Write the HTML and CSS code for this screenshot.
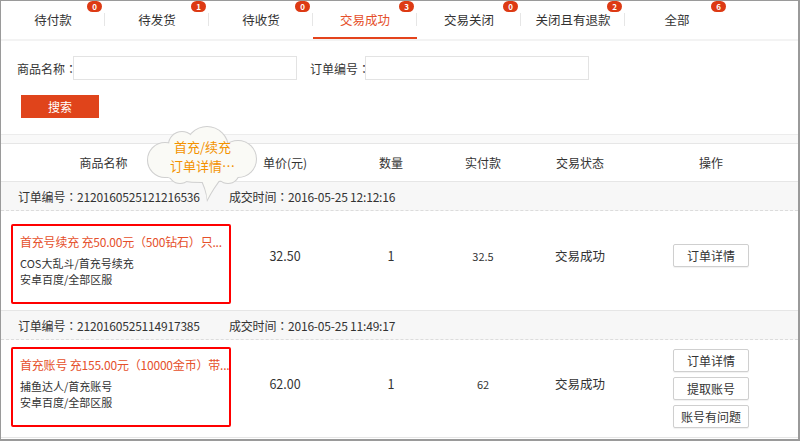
FILE: index.html
```html
<!DOCTYPE html>
<html lang="zh-CN">
<head>
<meta charset="utf-8">
<title>订单列表</title>
<link rel="stylesheet" href="styles.css">
</head>
<body>
<div class="frame">
  <div class="tabs">
    <div class="tab">待付款<span class="badge">0</span></div>
    <div class="tab">待发货<span class="badge">1</span></div>
    <div class="tab">待收货<span class="badge">0</span></div>
    <div class="tab active">交易成功<span class="badge">3</span></div>
    <div class="tab">交易关闭<span class="badge">0</span></div>
    <div class="tab">关闭且有退款<span class="badge">2</span></div>
    <div class="tab last">全部<span class="badge">6</span></div>
  </div>

  <div class="search">
    <div class="search-row">
      <label class="lbl">商品名称<span class="colon" lang="ja">：</span></label>
      <input class="inp" type="text">
      <label class="lbl lbl2">订单编号<span class="colon" lang="ja">：</span></label>
      <input class="inp" type="text">
    </div>
    <button class="btn-search">搜索</button>
  </div>

  <div class="gap"></div>

  <div class="grid head">
    <div class="c1 h1">商品名称</div>
    <div class="cc">单价(元)</div>
    <div class="cc">数量</div>
    <div class="cc">实付款</div>
    <div class="cc">交易状态</div>
    <div class="cc">操作</div>
  </div>

  <div class="info">
    <span class="ordno">订单编号<span class="colon" lang="ja">：</span>2120160525121216536</span>
    <span class="otime">成交时间<span class="colon" lang="ja">：</span>2016-05-25 12:12:16</span>
  </div>
  <div class="grid item item1">
    <div class="c1 goods">
      <div class="box">
        <div class="title">首充号续充 充50.00元（500钻石）只...</div>
        <div class="sub">COS大乱斗/首充号续充</div>
        <div class="sub">安卓百度/全部区服</div>
      </div>
    </div>
    <div class="cc cv">32.50</div>
    <div class="cc cv">1</div>
    <div class="cc cv small">32.5</div>
    <div class="cc cv">交易成功</div>
    <div class="cc ops pad"><button class="btn">订单详情</button></div>
  </div>

  <div class="info">
    <span class="ordno">订单编号<span class="colon" lang="ja">：</span>2120160525114917385</span>
    <span class="otime">成交时间<span class="colon" lang="ja">：</span>2016-05-25 11:49:17</span>
  </div>
  <div class="grid item item2">
    <div class="c1 goods">
      <div class="box">
        <div class="title">首充账号 充155.00元（10000金币）带...</div>
        <div class="sub">捕鱼达人/首充账号</div>
        <div class="sub">安卓百度/全部区服</div>
      </div>
    </div>
    <div class="cc cv">62.00</div>
    <div class="cc cv">1</div>
    <div class="cc cv small">62</div>
    <div class="cc cv">交易成功</div>
    <div class="cc ops">
      <button class="btn">订单详情</button>
      <button class="btn">提取账号</button>
      <button class="btn">账号有问题</button>
    </div>
  </div>

  <div class="bubble">
    <svg class="cloud" width="125" height="95" viewBox="0 0 125 95">
      <g fill="#cfcfcf">
        <ellipse cx="62" cy="40" rx="53" ry="21"/>
        <circle cx="25" cy="38" r="18"/>
        <circle cx="42" cy="23" r="14"/>
        <circle cx="67" cy="26" r="22"/>
        <circle cx="98" cy="37" r="19"/>
        <circle cx="40" cy="50" r="12"/>
        <circle cx="88" cy="50" r="12"/>
        <path d="M58 54 Q66 67 67 80 Q74 66 84 54 Z"/>
      </g>
      <g fill="#fafaf6">
        <ellipse cx="62" cy="40" rx="52" ry="20"/>
        <circle cx="25" cy="38" r="17"/>
        <circle cx="42" cy="23" r="13"/>
        <circle cx="67" cy="26" r="21"/>
        <circle cx="98" cy="37" r="18"/>
        <circle cx="40" cy="50" r="11"/>
        <circle cx="88" cy="50" r="11"/>
        <path d="M59.5 54 Q66.5 66 67.2 77.5 Q73 66 82.5 54 Z"/>
      </g>
    </svg>
    <div class="bubble-text">首充/续充<br>订单详情…</div>
  </div>
</div>
</body>
</html>
```

FILE: styles.css
```css
* { box-sizing: border-box; }
html, body { margin: 0; padding: 0; background: #fff; }
body {
  font-family: "Noto Sans CJK SC", sans-serif;
  font-size: 12px;
  color: #333;
}
.frame {
  position: relative;
  width: 800px;
  height: 441px;
  overflow: hidden;
  border-style: solid;
  border-color: #9a9a9a;
  border-width: 1px 2px 2px 1px;
}
.colon { font-family: "Noto Sans CJK JP", "Noto Sans CJK SC", sans-serif; }

/* tabs */
.tabs {
  display: flex;
  height: 40px;
  border-bottom: 2px solid #f3f3f3;
}
.tab {
  position: relative;
  width: 104px;
  height: 38px;
  line-height: 38px;
  text-align: center;
  font-size: 12.5px;
  color: #333;
}
.tab::after {
  content: "";
  position: absolute;
  right: 0;
  top: 12px;
  height: 13px;
  width: 1px;
  background: #e6e6e6;
}
.tab.last::after { display: none; }
.tab.active {
  color: #e5502b;
  box-shadow: inset 0 -2px 0 #e4431c;
}
.badge {
  position: absolute;
  right: 3px;
  top: 0;
  width: 15px;
  height: 11px;
  border-radius: 6px;
  background: #dd3a14;
  color: #fff;
  font-size: 8px;
  font-weight: bold;
  line-height: 11px;
  text-align: center;
}

/* search */
.search {
  height: 93px;
  padding: 15px 0 0 16px;
}
.search-row {
  display: flex;
  align-items: center;
  height: 24px;
}
.lbl {
  width: 56px;
  font-size: 12px;
  color: #333;
  white-space: nowrap;
}
.lbl2 { margin-left: 13px; width: 55px; }
.inp {
  width: 224px;
  height: 24px;
  border: 1px solid #e3e3e3;
  margin: 0;
  padding: 0 4px;
  outline: none;
}
.btn-search {
  display: block;
  margin: 15px 0 0 4px;
  width: 78px;
  height: 23px;
  border: 0;
  background: #e0441b;
  color: #fff;
  font-family: inherit;
  font-size: 12px;
  padding: 0;
}

.gap {
  height: 10px;
  background: #f9f9f9;
  border-top: 1px solid #ececec;
  border-bottom: 1px solid #e6e6e6;
}

/* table */
.grid {
  display: grid;
  grid-template-columns: 231px 106px 106px 78px 116px 146px;
}
.head {
  height: 38px;
  align-items: center;
  border-bottom: 1px solid #e6e6e6;
}
.cc { text-align: center; }
.h1 { padding-right: 26px; text-align: center; }

.info {
  display: flex;
  align-items: center;
  height: 29px;
  padding-left: 17px;
  background: #f7f7f7;
  border-bottom: 1px dashed #dcdcdc;
  font-size: 12px;
  letter-spacing: -0.2px;
}
.ordno { width: 211px; white-space: nowrap; }
.otime { white-space: nowrap; }

.item {
  align-items: center;
  border-bottom: 1px solid #e6e6e6;
}
.item1 .goods { padding: 13px 0 6px 10px; }
.item2 .goods { padding: 7px 0 10px 10px; }
.box {
  width: 220px;
  height: 80px;
  border: 2px solid #f00;
  border-radius: 2px;
  padding: 7px 8px 0 7px;
}
.title {
  font-size: 12px;
  line-height: 18px;
  color: #e5502b;
  white-space: nowrap;
  letter-spacing: -0.2px;
}
.sub {
  font-size: 11px;
  line-height: 16px;
  color: #333;
  white-space: nowrap;
}
.title + .sub { margin-top: 4px; }
.cv { padding-bottom: 10px; font-size: 12.5px; }
.cv.small { font-size: 11px; }
.ops {
  display: flex;
  flex-direction: column;
  align-items: center;
  gap: 5px;
}
.ops.pad { padding-bottom: 10px; }
.btn {
  width: 76px;
  height: 23px;
  padding: 0;
  border: 1px solid #cfcfcf;
  border-radius: 2px;
  background: #fff;
  box-shadow: 0 1px 1px rgba(0,0,0,0.06);
  font-family: inherit;
  font-size: 12px;
  color: #333;
}

/* thought bubble overlay */
.bubble {
  position: absolute;
  left: 139px;
  top: 121px;
  width: 125px;
  height: 95px;
}
.cloud { display: block; }
.bubble-text {
  position: absolute;
  left: 0;
  top: 15px;
  width: 125px;
  text-align: center;
  font-size: 13px;
  line-height: 19px;
  color: #f39200;
}
```
